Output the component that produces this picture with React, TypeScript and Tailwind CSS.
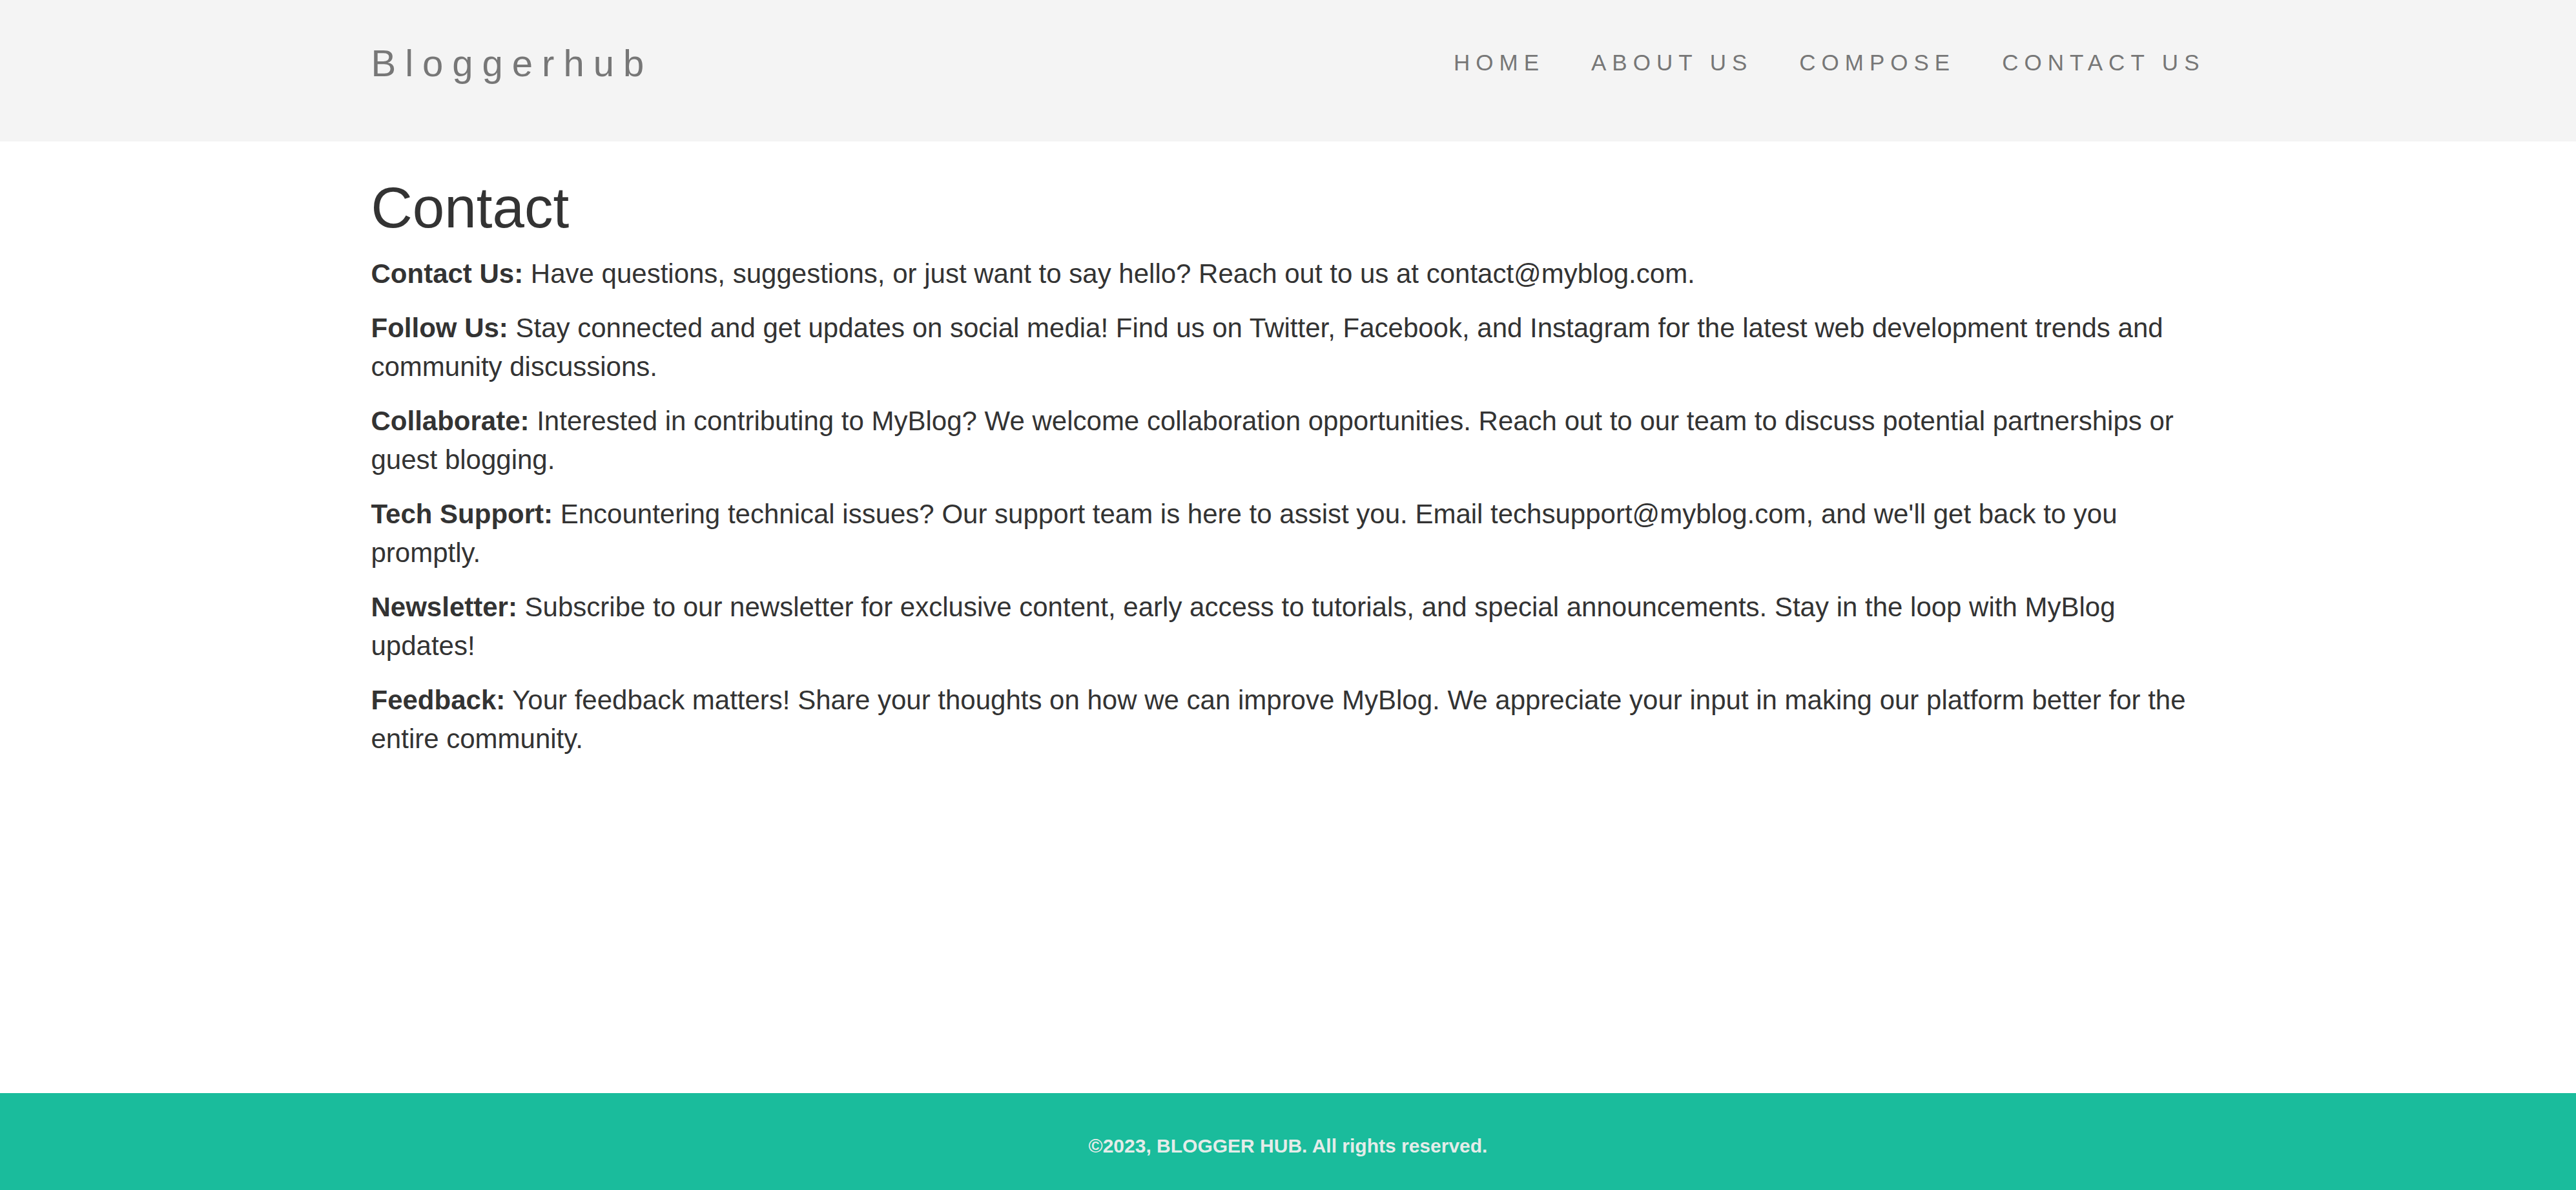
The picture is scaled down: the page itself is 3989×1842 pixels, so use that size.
const SECTIONS = [
  {
    label: "Contact Us:",
    text: "Have questions, suggestions, or just want to say hello? Reach out to us at contact@myblog.com.",
  },
  {
    label: "Follow Us:",
    text: "Stay connected and get updates on social media! Find us on Twitter, Facebook, and Instagram for the latest web development trends and community discussions.",
  },
  {
    label: "Collaborate:",
    text: "Interested in contributing to MyBlog? We welcome collaboration opportunities. Reach out to our team to discuss potential partnerships or guest blogging.",
  },
  {
    label: "Tech Support:",
    text: "Encountering technical issues? Our support team is here to assist you. Email techsupport@myblog.com, and we'll get back to you promptly.",
  },
  {
    label: "Newsletter:",
    text: "Subscribe to our newsletter for exclusive content, early access to tutorials, and special announcements. Stay in the loop with MyBlog updates!",
  },
  {
    label: "Feedback:",
    text: "Your feedback matters! Share your thoughts on how we can improve MyBlog. We appreciate your input in making our platform better for the entire community.",
  },
];

const LINKS = ["HOME", "ABOUT US", "COMPOSE", "CONTACT US"];

export default function App() {
  return (
    <div className="flex min-h-screen flex-col bg-white font-['Liberation_Sans',Arial,sans-serif] text-[#333]">
      {/* Navbar */}
      <header className="h-[219px] bg-[#f4f4f4]">
        <div className="mx-auto flex h-full w-[2840px] items-center justify-between pb-[24px]">
          <span className="text-[58px] tracking-[14px] text-[#777]">Bloggerhub</span>
          <nav className="flex gap-[72px]">
            {LINKS.map((l) => (
              <a key={l} href="#" className="text-[35px] tracking-[9px] text-[#777]">
                {l}
              </a>
            ))}
          </nav>
        </div>
      </header>

      {/* Content */}
      <main className="mx-auto w-[2840px] pt-[53px]">
        <h1 className="mb-[24px] text-[89px] leading-[98px] font-normal">Contact</h1>
        {SECTIONS.map((s) => (
          <p key={s.label} className="mb-[24px] text-[42px] leading-[60px]">
            <strong className="font-bold">{s.label}</strong> {s.text}
          </p>
        ))}
      </main>

      {/* Footer */}
      <footer className="mt-auto flex h-[150px] items-center justify-center bg-[#1abc9c] pt-[12px]">
        <p className="text-[30px] font-bold text-[#e4ece9]">©2023, BLOGGER HUB. All rights reserved.</p>
      </footer>
    </div>
  );
}
